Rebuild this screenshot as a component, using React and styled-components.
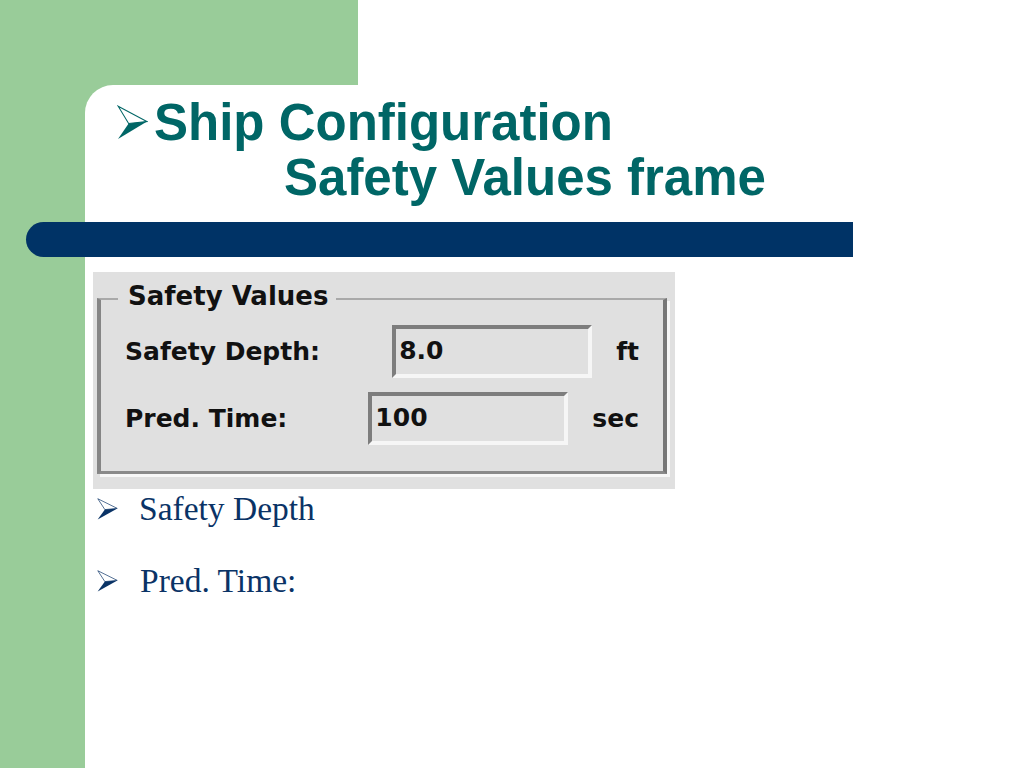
import React from 'react';
import styled, { createGlobalStyle } from 'styled-components';

const Global = createGlobalStyle`
  html, body { margin: 0; padding: 0; }
  body { width: 1024px; height: 768px; overflow: hidden; background: #fff; }
  * { box-sizing: border-box; }
`;

const Slide = styled.div`
  width: 1024px;
  height: 768px;
  display: grid;
  grid-template-columns: 85px 273px 1fr;
  grid-template-rows: 85px 1fr;
  background: #99cc99;
  overflow: hidden;
`;

const TopRight = styled.div`
  grid-column: 3;
  grid-row: 1;
  background: #fff;
`;

const Content = styled.main`
  grid-column: 2 / 4;
  grid-row: 2;
  background: #fff;
  border-top-left-radius: 28px;
  padding-top: 10px;
  display: flex;
  flex-direction: column;
  align-items: flex-start;
`;

const Title = styled.h1`
  margin: 0;
  padding-left: 32px;
  display: flex;
  align-items: flex-start;
  font: bold 51px/55px "Liberation Sans", Arial, sans-serif;
  color: #006666;
`;

const TitleLines = styled.div`
  display: flex;
  flex-direction: column;
`;

const TitleLine = styled.span`
  display: block;
  padding-left: ${(p) => p.$indent || 0}px;
  white-space: nowrap;
`;

const ArrowSvg = styled.svg`
  flex: none;
  width: ${(p) => p.$w}px;
  height: ${(p) => p.$h}px;
  margin-top: ${(p) => p.$mt || 0}px;
  margin-right: ${(p) => p.$mr || 0}px;
  color: ${(p) => p.$color};
`;

const Arrow = ({ w, h, mt, mr, color }) => (
  <ArrowSvg $w={w} $h={h} $mt={mt} $mr={mr} $color={color} viewBox="0 0 32 36" preserveAspectRatio="none">
    <path d="M1.2 1.2 L30.8 17 L12 19 Z" fill="#fff" stroke="currentColor" strokeWidth="1.1" strokeLinejoin="miter" />
    <path d="M12 19 L31 17 L1 35 Z" fill="currentColor" />
  </ArrowSvg>
);

const Bar = styled.div`
  margin-top: 17px;
  margin-left: -59px;
  width: 827px;
  height: 35px;
  background: #003366;
  border-radius: 17.5px 0 0 17.5px;
`;

const Panel = styled.section`
  margin: 15px 0 0 8px;
  width: 582px;
  height: 217px;
  background: #e0e0e0;
  padding: 11px 8px 14px 4px;
  font-family: "DejaVu Sans", Verdana, sans-serif;
  font-weight: bold;
  color: #111;
`;

const Group = styled.fieldset`
  margin: 0;
  min-width: 0;
  width: 570px;
  border-style: solid;
  border-width: 2px 4px 3px 4px;
  border-color: #a9a9a9 #777 #8a8a8a #858585;
  box-shadow: 3px 3px 0 #f7f7f7;
  padding: 10px 24px 26px 17px;
  display: flex;
  flex-direction: column;
  gap: 14px;
`;

const Legend = styled.legend`
  font-size: 26px;
  line-height: 26px;
  padding: 0 8px 6px 10px;
  white-space: nowrap;
`;

const Row = styled.div`
  display: flex;
  align-items: center;
  padding-left: 7px;
  font-size: 25px;
`;

const Label = styled.span`
  flex: 1;
  white-space: nowrap;
`;

const Field = styled.div`
  width: 200px;
  height: 53px;
  display: flex;
  align-items: center;
  padding-left: 3px;
  padding-bottom: 3px;
  background: #e0e0e0;
  border-style: solid;
  border-width: 4px;
  border-color: #7d7d7d #f6f6f6 #f6f6f6 #7d7d7d;
`;

const Unit = styled.span`
  margin-left: 24px;
  white-space: nowrap;
`;

const Bullets = styled.ul`
  list-style: none;
  margin: 0;
  padding: 0 0 0 12px;
  display: flex;
  flex-direction: column;
  gap: 32px;
`;

const Bullet = styled.li`
  display: flex;
  align-items: center;
  height: 40px;
  font: 33.5px/40px "Liberation Serif", "Times New Roman", serif;
  color: #0a3366;
  white-space: nowrap;
`;

const rows = [
  { label: 'Safety Depth:', value: '8.0', unit: 'ft' },
  { label: 'Pred. Time:', value: '100', unit: 'sec' },
];

export default function App() {
  return (
    <>
      <Global />
      <Slide>
        <TopRight />
        <Content>
          <Title>
            <Arrow w={31} h={35} mt={10} mr={6} color="#006666" />
            <TitleLines>
              <TitleLine>Ship Configuration</TitleLine>
              <TitleLine $indent={130}>Safety Values frame</TitleLine>
            </TitleLines>
          </Title>
          <Bar />
          <Panel>
            <Group>
              <Legend>Safety Values</Legend>
              {rows.map((r) => (
                <Row key={r.label}>
                  <Label>{r.label}</Label>
                  <Field>{r.value}</Field>
                  <Unit>{r.unit}</Unit>
                </Row>
              ))}
            </Group>
          </Panel>
          <Bullets>
            <Bullet>
              <Arrow w={21} h={22} mr={21} color="#0a3366" />
              Safety Depth
            </Bullet>
            <Bullet>
              <Arrow w={21} h={22} mr={22} color="#0a3366" />
              Pred. Time:
            </Bullet>
          </Bullets>
        </Content>
      </Slide>
    </>
  );
}
